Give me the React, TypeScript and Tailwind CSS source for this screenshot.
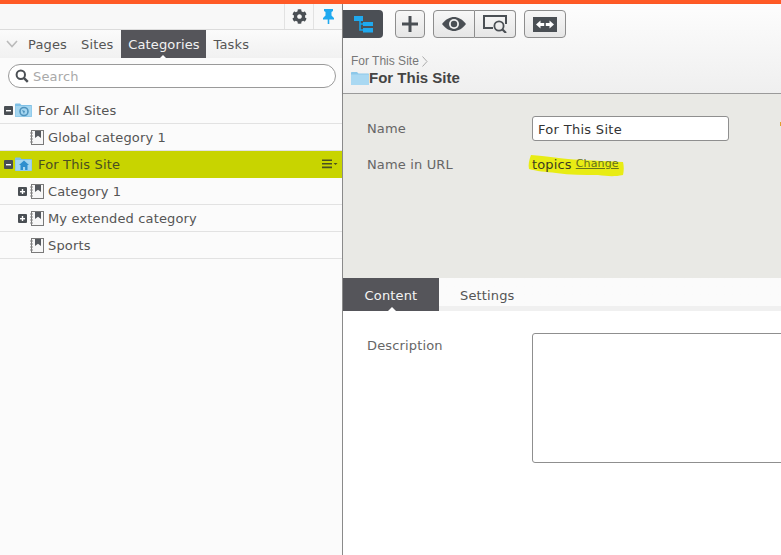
import { FaCog } from "react-icons/fa";

const sans = "font-['DejaVu_Sans',Verdana,sans-serif] tracking-[0.15px]";

const Box = ({ plus = false }: { plus?: boolean }) => (
  <svg width="9" height="9" viewBox="0 0 9 9" className="shrink-0">
    <rect width="9" height="9" rx="1" fill="#4a4f54" />
    <rect x="2" y="4" width="5" height="1.4" fill="#fff" />
    {plus && <rect x="3.8" y="2" width="1.4" height="5" fill="#fff" />}
  </svg>
);

const CategoryIcon = () => (
  <svg width="14" height="15" viewBox="0 0 14 15" className="shrink-0">
    <rect x="1.5" y="0.5" width="12" height="14" fill="#f7f7f7" stroke="#7a7a7a" />
    <path d="M0 3h3M0 6h3M0 9h3M0 12h3" stroke="#888" strokeWidth="1" />
    <path d="M5 1h6v7L8 5.8 5 8z" fill="#55595e" />
  </svg>
);

const FolderIcon = ({ kind }: { kind: "globe" | "home" }) => (
  <svg width="17" height="14" viewBox="0 0 17 14" className="shrink-0">
    <path d="M0 1.5C0 .8.5.5 1 .5h4l1.5 1.5H16c.6 0 1 .4 1 1V13c0 .6-.4 1-1 1H1c-.6 0-1-.4-1-1z" fill="#7fc0e6" />
    <rect x="0.5" y="3" width="16" height="10.5" fill="#a5d6f0" />
    {kind === "globe" ? (
      <>
        <circle cx="9" cy="8.5" r="4" fill="none" stroke="#4f93bd" strokeWidth="1.6" />
        <path d="M7 7l3 1-1 3z" fill="#4f93bd" />
      </>
    ) : (
      <path d="M9 3.5l5 4.5h-1.5v5h-2.4V10H8v3H5.5V8H4z" fill="#2f8fce" />
    )}
  </svg>
);

const Row = ({
  label,
  plus,
  root,
  active,
}: {
  label: string;
  plus?: boolean;
  root?: "globe" | "home";
  active?: boolean;
}) => (
  <div
    className={`flex h-[27px] items-center border-b ${
      active ? "border-[#c8d400] bg-[#c8d400] text-[#4a4f20]" : "border-[#e2e2e2] text-[#555]"
    }`}
  >
    {root ? (
      <div className="flex items-center gap-[2px] pl-[4px]">
        <Box />
        <FolderIcon kind={root} />
        <span className="ml-[4px] pt-[2px]">{label}</span>
      </div>
    ) : (
      <div className="flex items-center pl-[18px]">
        <div className="w-[12px]">{plus && <Box plus />}</div>
        <CategoryIcon />
        <span className="ml-[4px] pt-[2px]">{label}</span>
      </div>
    )}
    {active && (
      <svg width="16" height="10" viewBox="0 0 16 10" className="ml-auto mr-[4px]">
        <path d="M0 .5h10v1.6H0zM0 4h10v1.6H0zM0 7.6h10v1.6H0z" fill="#4a5020" />
        <path d="M11.5 4h4l-2 2z" fill="#4a5020" />
      </svg>
    )}
  </div>
);

const ToolButton = ({ className, children }: { className: string; children: React.ReactNode }) => (
  <div
    className={`flex h-[28px] items-center justify-center border border-[#8d8d8d] bg-gradient-to-b from-[#f7f7f7] to-[#e6e6e6] ${className}`}
  >
    {children}
  </div>
);

const Sidebar = () => (
  <aside className={`flex w-[343px] shrink-0 flex-col border-r border-[#8a8a8a] bg-[#fbfbfb] ${sans} text-[13px]`}>
    <div className="flex h-[26px] justify-end border-b border-[#dcdcdc] bg-[#f8f8f8]">
      <div className="flex w-[29px] items-center justify-center border-l border-[#e2e2e2]">
        <FaCog size={15} className="text-[#4a4f54]" />
      </div>
      <div className="flex w-[29px] items-center justify-center border-l border-[#e2e2e2]">
        <svg width="11" height="15" viewBox="0 0 11 15">
          <path d="M1 0h9v2L8.5 3v3.5L11 9v1.5H6.3V15H4.7v-4.5H0V9l2.5-2.5V3L1 2z" fill="#1fa9ef" />
        </svg>
      </div>
    </div>
    <div className="flex h-[28px] items-center bg-gradient-to-b from-[#fbfbfb] to-[#f1f1f1] pl-[6px] text-[#555]">
      <svg width="12" height="8" viewBox="0 0 12 8">
        <path d="M1 1l5 5.5L11 1" fill="none" stroke="#bbb" strokeWidth="1.6" />
      </svg>
      <span className="ml-[10px] pt-[1px]">Pages</span>
      <span className="ml-[14px] pt-[1px]">Sites</span>
      <div className="relative ml-[8px] flex h-full w-[85px] items-center justify-center bg-[#55555a] pt-[1px] text-[#f2f2f2]">
        Categories
        <div className="absolute bottom-0 left-[39px] h-0 w-0 border-x-[3px] border-b-[3px] border-x-transparent border-b-white" />
      </div>
      <span className="ml-[7px] pt-[1px]">Tasks</span>
    </div>
    <div className="pl-[8px] pr-[6px] pt-[6px] pb-[9px]">
      <div className="flex h-[24px] items-center rounded-full border border-[#9a9a9a] bg-white pl-[6px]">
        <svg width="14" height="14" viewBox="0 0 14 14">
          <circle cx="5.8" cy="5.8" r="4.2" fill="none" stroke="#4a4f54" strokeWidth="2" />
          <path d="M8.8 8.8l4 4" stroke="#4a4f54" strokeWidth="2.4" />
        </svg>
        <span className="ml-[4px] pt-[1px] text-[#a9a9a9]">Search</span>
      </div>
    </div>
    <Row label="For All Sites" root="globe" />
    <Row label="Global category 1" />
    <Row label="For This Site" root="home" active />
    <Row label="Category 1" plus />
    <Row label="My extended category" plus />
    <Row label="Sports" />
  </aside>
);

const Toolbar = () => (
  <div className="flex h-[34px] items-start pt-[6px]">
    <div className="flex h-[28px] w-[40px] items-center justify-center rounded-r-[4px] bg-[#4b4f55]">
      <svg width="19" height="17" viewBox="0 0 19 17">
        <path d="M6 4v10h5M6 8h5" fill="none" stroke="#16a3e8" strokeWidth="1.6" />
        <rect x="0" y="0" width="9" height="5" fill="#1fa9ef" />
        <rect x="9" y="6" width="10" height="4" fill="#1fa9ef" />
        <rect x="9" y="12" width="10" height="4.5" fill="#1fa9ef" />
      </svg>
    </div>
    <ToolButton className="ml-[12px] w-[30px] rounded-[4px]">
      <svg width="16" height="16" viewBox="0 0 16 16">
        <path d="M6.5 0h3v6.5H16v3H9.5V16h-3V9.5H0v-3h6.5z" fill="#4a4f54" />
      </svg>
    </ToolButton>
    <ToolButton className="ml-[8px] w-[42px] rounded-l-[4px]">
      <svg width="24" height="14" viewBox="0 0 24 14">
        <path d="M0 7C4 2 8 0 12 0s8 2 12 7c-4 5-8 7-12 7S4 12 0 7z" fill="#4a4f54" />
        <circle cx="12" cy="7" r="5" fill="#f0f0f0" />
        <circle cx="12" cy="7" r="3.2" fill="#4a4f54" />
      </svg>
    </ToolButton>
    <ToolButton className="w-[41px] rounded-r-[4px] border-l-0">
      <svg width="25" height="18" viewBox="0 0 25 18">
        <path d="M10 13H1V1h22v8" fill="none" stroke="#4a4f54" strokeWidth="2" />
        <circle cx="16" cy="11" r="4.6" fill="none" stroke="#4a4f54" strokeWidth="1.8" />
        <path d="M19.5 14.5l3.5 3.5" stroke="#4a4f54" strokeWidth="2.2" />
      </svg>
    </ToolButton>
    <ToolButton className="ml-[8px] w-[42px] rounded-[4px]">
      <svg width="24" height="15" viewBox="0 0 24 15">
        <rect width="24" height="15" fill="#4a4f54" />
        <path d="M3 7.5L7.5 3.5v2.6h3.7v2.8H7.5v2.6zM21 7.5l-4.5-4v2.6h-3.7v2.8h3.7v2.6z" fill="#fff" />
      </svg>
    </ToolButton>
  </div>
);

const Highlight = () => (
  <svg width="96" height="22" viewBox="0 0 96 22" className="absolute left-[-4px] top-0">
    <path
      d="M3 0C20 1 26 3 40 4c15 1 36 2 55 3 1 4 1 9 0 13-10 2-16 1-25 0-14 0-28 0-42-2C18 17 8 16 1 14 0 10 1 5 3 0z"
      fill="#e8ec14"
    />
  </svg>
);

const Form = () => (
  <div className="relative h-[184px] bg-[#e9e9e5] pl-[24px] pt-[22px] text-[13px] text-[#666]">
    <div className="absolute right-0 top-[28px] h-[4px] w-[1px] bg-[#e0a030]" />
    <div className="flex items-center">
      <span className="w-[165px] shrink-0">Name</span>
      <div className="flex h-[25px] w-[197px] items-center rounded-[3px] border border-[#8f8f8f] bg-white pl-[5px] pt-[2px] tracking-[0.3px] text-[#333]">
        For This Site
      </div>
    </div>
    <div className="mt-[11px] flex h-[25px] items-center">
      <span className="w-[165px] shrink-0">Name in URL</span>
      <div className="relative flex items-center text-[#3c3c20]">
        <Highlight />
        <span className="relative">topics</span>
        <span className="relative ml-[4px] text-[11px] text-[#66701e] underline">Change</span>
      </div>
    </div>
  </div>
);

const ContentTabs = () => (
  <div className="flex h-[33px] items-stretch bg-gradient-to-b from-[#fbfbfb] from-85% to-[#f0f0f0] to-85% text-[13px] text-[#555]">
    <div className="relative flex w-[96px] items-center justify-center bg-[#55555a] pt-[2px] text-[#f4f4f4]">
      Content
      <div className="absolute bottom-0 left-[45px] h-0 w-0 border-x-[4px] border-b-[4px] border-x-transparent border-b-white" />
    </div>
    <span className="ml-[21px] flex items-center pt-[2px]">Settings</span>
  </div>
);

export default function App() {
  return (
    <div className="h-[555px] w-[781px] overflow-hidden bg-white">
      <div className="h-[4px] bg-[#ff5a26]" />
      <div className="flex h-[551px]">
        <Sidebar />
        <main className={`relative min-w-0 flex-1 ${sans}`}>
          <div className="h-[90px] border-b border-[#9a9a9a] bg-gradient-to-b from-[#fdfdfd] to-[#efefef] shadow-[0_1px_2px_rgba(0,0,0,0.2)]">
            <Toolbar />
            <div className="pl-[8px] pt-[16px]">
              <div className="flex items-center font-['Liberation_Sans',Arial,sans-serif] text-[12px] leading-[14px] tracking-normal text-[#777]">
                For This Site
                <svg width="6" height="11" viewBox="0 0 6 11" className="ml-[3px]">
                  <path d="M.5.5L5 5.5.5 10.5" fill="none" stroke="#aaa" />
                </svg>
              </div>
              <div className="mt-[2px] flex items-center font-['Liberation_Sans',Arial,sans-serif] text-[15px] font-bold leading-[16px] tracking-normal text-[#444]">
                <svg width="18" height="13" viewBox="0 0 18 13" className="shrink-0">
                  <path d="M0 1c0-.6.4-1 1-1h5l1.5 1.5H17c.6 0 1 .4 1 1V13H0z" fill="#8cc8ea" />
                  <rect y="2.5" width="18" height="10.5" fill="#a9d8f2" />
                </svg>
                For This Site
              </div>
            </div>
          </div>
          <Form />
          <ContentTabs />
          <div className="flex pl-[24px] pt-[22px] text-[13px] text-[#666]">
            <span className="w-[165px] shrink-0 pt-[3px]">Description</span>
            <div className="h-[130px] w-[300px] shrink-0 rounded-l-[3px] border border-[#8f8f8f] bg-white" />
          </div>
        </main>
      </div>
    </div>
  );
}
